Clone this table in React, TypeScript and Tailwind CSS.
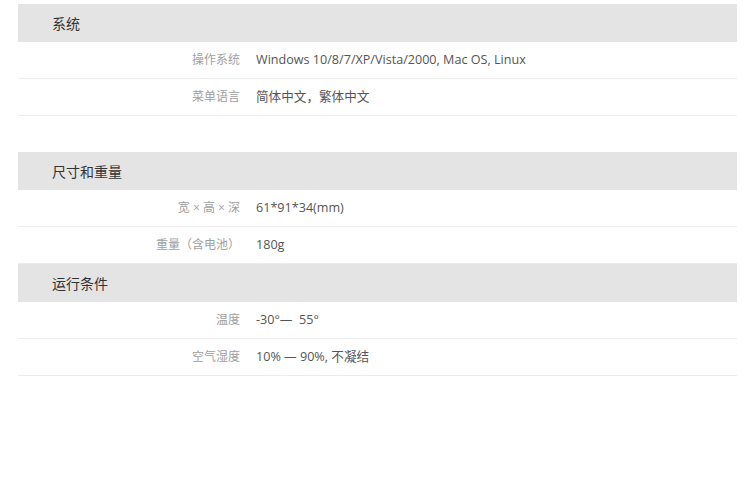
const font = { fontFamily: '"Open Sans", "Noto Sans CJK SC", sans-serif' };

type Row = { label: string; value: string };

const sections: { title: string; rows: Row[]; spacer?: boolean }[] = [
    {
        title: "系统",
        rows: [
            { label: "操作系统", value: "Windows 10/8/7/XP/Vista/2000, Mac OS, Linux" },
            { label: "菜单语言", value: "简体中文，繁体中文" },
        ],
        spacer: true,
    },
    {
        title: "尺寸和重量",
        rows: [
            { label: "宽 × 高 × 深", value: "61*91*34(mm)" },
            { label: "重量（含电池）", value: "180g" },
        ],
    },
    {
        title: "运行条件",
        rows: [
            { label: "温度", value: "-30°—  55°" },
            { label: "空气湿度", value: "10% — 90%, 不凝结" },
        ],
    },
];

export default function App() {
    return (
        <div className="w-[750px] h-[495px] bg-white pt-1 pl-[18px]" style={font}>
            <div className="w-[719px]">
                {sections.map((s) => (
                    <div key={s.title}>
                        <div className="h-[38px] bg-[#e4e4e4] flex items-center pl-[34px] text-[14px] text-[#333]">
                            {s.title}
                        </div>
                        {s.rows.map((r) => (
                            <div key={r.label} className="h-[37px] flex items-center border-b border-[#ececec]">
                                <div className="w-[222px] text-right text-[12px] text-[#a0a0a0]">{r.label}</div>
                                <div className="pl-4 text-[12.6px] text-[#555] whitespace-pre">{r.value}</div>
                            </div>
                        ))}
                        {s.spacer && <div className="h-[36px]" />}
                    </div>
                ))}
            </div>
        </div>
    );
}
